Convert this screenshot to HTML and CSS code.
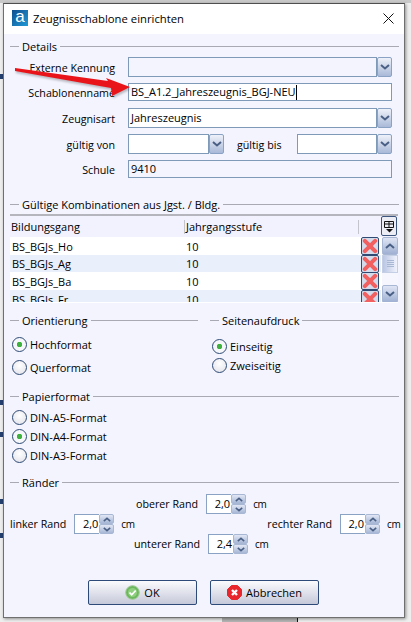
FILE: index.html
```html
<!DOCTYPE html>
<html lang="de">
<head>
<meta charset="utf-8">
<title>Zeugnisschablone einrichten</title>
<link rel="stylesheet" href="styles.css">
</head>
<body>
<svg class="defs" width="0" height="0" aria-hidden="true">
  <defs>
    <symbol id="down" viewBox="0 0 10 6"><path d="M1 1l4 3.4L9 1" fill="none" stroke="#4a5f85" stroke-width="2"/></symbol>
    <symbol id="up" viewBox="0 0 10 6"><path d="M1 5l4-3.4L9 5" fill="none" stroke="#4a5f85" stroke-width="2"/></symbol>
    <symbol id="redx" viewBox="0 0 14 14"><path d="M2.5 2.5l9 9M11.500 2.500l-9 9" stroke="#f2605f" stroke-width="3.600" stroke-linecap="round"/></symbol>
  </defs>
</svg>

<div class="stray stray-a"></div><div class="stray stray-b"></div><div class="stray stray-c"></div><div class="stray stray-d"></div><div class="stray stray-e"></div>
<div class="topstrip"></div>
<div class="bottombar"></div>

<main class="window">
  <header class="titlebar">
    <span class="logo">a</span>
    <span class="title">Zeugnisschablone einrichten</span>
    <svg class="close" width="11" height="11" viewBox="0 0 11 11"><path d="M.5.500l10 10M10.500.500l-10 10" stroke="#111" stroke-width="1"/></svg>
  </header>

  <div class="content">
    <section class="group details">
      <div class="legend"><span>Details</span></div>
      <div class="form">
        <div class="row r1">
          <label>Externe Kennung</label>
          <div class="combo"><div class="field"></div><button class="dd"><svg width="10" height="6"><use href="#down"/></svg></button></div>
        </div>
        <div class="row r2">
          <label>Schablonenname</label>
          <div class="field active">BS_A1.2_Jahreszeugnis_BGJ-NEU<i class="caret"></i></div>
        </div>
        <div class="row r3">
          <label>Zeugnisart</label>
          <div class="combo"><div class="field white">Jahreszeugnis</div><button class="dd"><svg width="10" height="6"><use href="#down"/></svg></button></div>
        </div>
        <div class="row r4">
          <label>gültig von</label>
          <div class="combo von"><div class="field white"></div><button class="dd"><svg width="10" height="6"><use href="#down"/></svg></button></div>
          <label class="bis">gültig bis</label>
          <div class="combo biscombo"><div class="field white"></div><button class="dd"><svg width="10" height="6"><use href="#down"/></svg></button></div>
        </div>
        <div class="row r5">
          <label>Schule</label>
          <div class="field">9410</div>
        </div>
      </div>
    </section>

    <section class="group combos">
      <div class="legend"><span>Gültige Kombinationen aus Jgst. / Bldg.</span></div>
      <div class="table">
        <div class="thead">
          <div class="th c1">Bildungsgang</div>
          <div class="th c2">Jahrgangsstufe</div>
          <button class="colbtn"><svg width="13" height="13" viewBox="0 0 13 13"><path d="M1.500 1.500h9v6h-9zM1.500 4h9M6 1.500v6" fill="none" stroke="#111"/><path d="M3 9h7l-3.500 3.500z" fill="#111"/></svg></button>
        </div>
        <div class="tbody">
          <div class="rows">
            <div class="tr h1"><div class="td c1">BS_BGJs_Ho</div><div class="td c2">10</div><button class="del"><svg width="16" height="16"><use href="#redx"/></svg></button></div>
            <div class="tr h2 alt"><div class="td c1">BS_BGJs_Ag</div><div class="td c2">10</div><button class="del"><svg width="16" height="16"><use href="#redx"/></svg></button></div>
            <div class="tr h1"><div class="td c1">BS_BGJs_Ba</div><div class="td c2">10</div><button class="del"><svg width="16" height="16"><use href="#redx"/></svg></button></div>
            <div class="tr h1 alt"><div class="td c1">BS_BGJs_Fr</div><div class="td c2">10</div><button class="del"><svg width="16" height="16"><use href="#redx"/></svg></button></div>
          </div>
          <div class="scrollbar">
            <button class="sb"><svg width="10" height="6"><use href="#up"/></svg></button>
            <div class="thumb"></div>
            <button class="sb end"><svg width="10" height="6"><use href="#down"/></svg></button>
          </div>
        </div>
      </div>
    </section>

    <div class="two">
      <section class="group orient">
        <div class="legend"><span>Orientierung</span></div>
        <div class="radios spaced">
          <div class="radio on">Hochformat</div>
          <div class="radio">Querformat</div>
        </div>
      </section>
      <section class="group seite">
        <div class="legend"><span>Seitenaufdruck</span></div>
        <div class="radios tight">
          <div class="radio on">Einseitig</div>
          <div class="radio">Zweiseitig</div>
        </div>
      </section>
    </div>

    <section class="group papier">
      <div class="legend"><span>Papierformat</span></div>
      <div class="radios paper">
        <div class="radio">DIN-A5-Format</div>
        <div class="radio on">DIN-A4-Format</div>
        <div class="radio">DIN-A3-Format</div>
      </div>
    </section>

    <section class="group raender">
      <div class="legend"><span>Ränder</span></div>
      <div class="margins">
        <div class="mrow top">
          <label>oberer Rand</label>
          <div class="spin"><div class="val">2,0</div><div class="arrows"><button><svg width="8" height="5"><use href="#up"/></svg></button><button><svg width="8" height="5"><use href="#down"/></svg></button></div></div>
          <span>cm</span>
        </div>
        <div class="mrow mid">
          <div class="mgroup">
            <label>linker Rand</label>
            <div class="spin"><div class="val">2,0</div><div class="arrows"><button><svg width="8" height="5"><use href="#up"/></svg></button><button><svg width="8" height="5"><use href="#down"/></svg></button></div></div>
            <span>cm</span>
          </div>
          <div class="mgroup">
            <label>rechter Rand</label>
            <div class="spin"><div class="val">2,0</div><div class="arrows"><button><svg width="8" height="5"><use href="#up"/></svg></button><button><svg width="8" height="5"><use href="#down"/></svg></button></div></div>
            <span>cm</span>
          </div>
        </div>
        <div class="mrow bottom">
          <label>unterer Rand</label>
          <div class="spin"><div class="val">2,4</div><div class="arrows"><button><svg width="8" height="5"><use href="#up"/></svg></button><button><svg width="8" height="5"><use href="#down"/></svg></button></div></div>
          <span>cm</span>
        </div>
      </div>
    </section>

    <div class="actions">
      <button class="action"><svg width="15" height="15" viewBox="0 0 15 15"><circle cx="7.500" cy="7.500" r="6.800" fill="#6cb85c" stroke="#9fc995"/><circle cx="7.500" cy="7.500" r="4.500" fill="#8fcf7f"/><path d="M4.500 7.500l2.200 2.300 4-4.300" fill="none" stroke="#fff" stroke-width="1.800"/></svg>OK</button>
      <button class="action"><svg width="15" height="15" viewBox="0 0 15 15"><path d="M4.500.500h6l4 4v6l-4 4h-6l-4-4v-6z" fill="#e8262b" stroke="#e8262b"/><path d="M5 5l5 5M10 5l-5 5" stroke="#fff" stroke-width="2.400"/></svg>Abbrechen</button>
    </div>
  </div>
</main>

<svg class="arrow" width="140" height="50" viewBox="0 0 140 50" aria-hidden="true">
  <polygon points="15,9 108,22 106,19 130,28 112,37 111,29 15,12" fill="#e8141a"/>
</svg>
</body>
</html>
```
FILE: styles.css
```css
* { box-sizing: border-box; }
html, body { margin: 0; padding: 0; }
body {
  width: 411px;
  height: 622px;
  position: relative;
  overflow: hidden;
  background: #eeeeee;
  font-family: "Open Sans", "Noto Sans", sans-serif;
  font-size: 11px;
  color: #000;
}
.defs { position: absolute; }
.topstrip { position: absolute; left: 0; right: 0; top: 0; height: 3px; background: #c9c9c9; }
.bottombar { position: absolute; left: 222px; top: 617px; width: 76px; height: 5px; background: #b4b4b4; border-right: 1px solid #111; }
.stray { position: absolute; left: 0; width: 3px; height: 5px; background: #24406e; }
.stray-a { top: 74px; }
.stray-b { top: 400px; }
.stray-c { top: 432px; }
.stray-d { top: 499px; }
.stray-e { top: 533px; }

.window {
  position: absolute;
  left: 3px;
  top: 3px;
  width: 402px;
  height: 615px;
  background: #f3f4fe;
  border: 1px solid #6f6f6f;
  border-top-color: #4e4e4e;
  box-shadow: 1px 1px 3px rgba(0,0,0,.4);
  display: flex;
  flex-direction: column;
}
.titlebar {
  height: 30px;
  flex: none;
  background: #fff;
  display: flex;
  align-items: center;
  padding: 0 10px 2px 8px;
  gap: 5px;
}
.logo {
  width: 16px;
  height: 16px;
  background: linear-gradient(135deg, #0f4e8e, #1e9ad6);
  color: #fff;
  font-size: 17px;
  line-height: 13px;
  text-align: center;
  font-family: "Liberation Sans", sans-serif;
}
.title { flex: 1; font-size: 11.3px; }
.content { flex: 1; display: flex; flex-direction: column; padding: 0 5px 0 6px; }

.group { display: flex; flex-direction: column; }
.legend {
  height: 14px;
  display: flex;
  align-items: center;
  gap: 3px;
}
.legend::before { content: ""; width: 9px; height: 1px; background: #a9a9b3; }
.legend::after { content: ""; flex: 1; height: 1px; background: #a9a9b3; }

.details { margin-top: 5px; }
.form { padding-top: 4px; display: flex; flex-direction: column; }
.row { display: flex; align-items: center; padding-right: 7px; }
.row > label { padding-top: 1px; font-size: 10.7px; }
.row > label:first-child { width: 105px; text-align: right; margin-right: 13px; }
.r1 { height: 20px; }
.r2 { height: 18px; margin-top: 6px; }
.r3 { height: 20px; margin-top: 7px; }
.r4 { height: 20px; margin-top: 6px; }
.r5 { height: 18px; margin-top: 6px; }
.field {
  flex: 1;
  height: 100%;
  border: 1px solid #7f9ab9;
  padding: 0 2px;
  line-height: 16px;
  min-width: 0;
}
.r3 .field, .r4 .field { line-height: 18px; }
.white, .active { background: #fff; }
.active { display: flex; align-items: center; }
.caret { width: 1px; height: 15px; background: #000; }
.combo { flex: 1; display: flex; height: 100%; }
.dd {
  width: 15px;
  flex: none;
  height: 100%;
  padding: 0;
  border: 1px solid #8aa3c4;
  border-radius: 2px;
  background: linear-gradient(#eef1f9, #a9b9d8);
  display: flex;
  align-items: center;
  justify-content: center;
}
.von { flex: none; width: 96px; }
.bis { margin: 0 12px 0 13px; width: 48px; }
.biscombo { flex: none; width: 95px; }

.combos { margin-top: 19px; }
.table { margin-top: 3px; margin-right: 1px; border-top: 2px solid #b4b5bd; }
.thead { height: 21px; display: flex; align-items: center; position: relative; background: #f1f2fe; }
.th { height: 14px; line-height: 14px; border-right: 1px solid #c3c4cc; }
.thead .c1 { width: 175px; padding-left: 1px; }
.thead .c2 { width: 174px; padding-left: 1px; }
.colbtn {
  position: absolute;
  left: 371px;
  top: 0;
  width: 16px;
  height: 20px;
  padding: 0;
  border: 1px solid #3c5680;
  border-radius: 2px;
  background: #ecedf5;
  display: flex;
  align-items: center;
  justify-content: center;
}
.tbody { display: flex; height: 66px; overflow: hidden; background: #fff; border-bottom: 1px solid #fff; }
.rows { width: 371px; flex: none; }
.tr { display: flex; align-items: center; background: #fff; }
.h1 { height: 18px; }
.h2 { height: 17px; }
.alt { background: #e9effb; }
.td.c1 { width: 175px; padding-left: 2px; }
.td.c2 { width: 176px; padding-left: 1px; }
.del {
  width: 18px;
  height: 18px;
  flex: none;
  padding: 0;
  border: 1px solid #2f4a73;
  border-radius: 2px;
  background: #d4dcec;
  display: flex;
  align-items: center;
  justify-content: center;
}
.scrollbar { width: 16px; margin-left: 1px; display: flex; flex-direction: column; height: 66px; position: relative; background: #f6f7fe; }
.sb {
  height: 18px;
  width: 16px;
  padding: 0;
  border: 1px solid #a8b7d3;
  border-radius: 2px;
  background: linear-gradient(#dfe5f4, #9fb0d3);
  display: flex;
  align-items: center;
  justify-content: center;
}
.sb.end { position: absolute; left: 0; top: 48px; }
.thumb {
  height: 18px;
  background: repeating-linear-gradient(#a8b7d3 0 1px, transparent 1px 2px) center / 7px 8px no-repeat, linear-gradient(90deg, #b9c6e4, #f0f3fb);
  border: 1px solid #c4cfe5;
}

.two { display: grid; grid-template-columns: 188px 189px; column-gap: 12px; margin-top: 10px; }
.radios { display: flex; flex-direction: column; }
.radio { display: flex; align-items: center; height: 19px; gap: 3px; padding-left: 2px; }
.radio::before {
  content: "";
  width: 13px;
  height: 13px;
  border-radius: 50%;
  border: 1px solid #2e4a75;
  background: radial-gradient(circle at 50% 35%, #fff, #dfe0e8);
  flex: none;
}
.radio.on::before { background: radial-gradient(circle, #3eb13e 0 2.500px, #f6f7fb 3px); }
.spaced { padding-top: 8px; gap: 4px; }
.tight { padding-top: 10px; }
.orient, .seite { height: 76px; }
.paper { padding-top: 5px; }
.raender { margin-top: 10px; }
.margins { padding-top: 5px; display: flex; flex-direction: column; }
.mrow { display: flex; align-items: center; height: 20px; }
.mrow label { margin-right: 8px; font-size: 10.7px; }
.mrow > span, .mgroup > span { margin-left: 7px; font-size: 10px; letter-spacing: -.3px; width: 12px; white-space: nowrap; }
.top { padding-left: 126px; }
.bottom { padding-left: 124px; }
.mid { justify-content: space-between; }
.mgroup { display: flex; align-items: center; }
.spin { display: flex; height: 20px; }
.val {
  width: 25px;
  height: 20px;
  background: #fff;
  border: 1px solid #8aa3c4;
  border-right: 0;
  text-align: right;
  line-height: 18px;
  padding-right: 1px;
}
.arrows { width: 15px; display: flex; flex-direction: column; }
.arrows button {
  height: 10px;
  padding: 0;
  border: 1px solid #a8b7d3;
  border-radius: 2px;
  background: linear-gradient(#e2e7f5, #a7b7d6);
  display: flex;
  align-items: center;
  justify-content: center;
}
.actions { display: flex; gap: 13px; padding-left: 78px; margin-top: 26px; }
.action {
  width: 109px;
  height: 25px;
  border: 1px solid #2d4a78;
  border-radius: 2px;
  background: linear-gradient(#fbfbfe, #c5c8d9);
  font: inherit;
  color: #000;
  display: flex;
  align-items: center;
  justify-content: center;
  gap: 4px;
  padding: 0;
}
.arrow { position: absolute; left: 0; top: 59px; filter: drop-shadow(1px 2px 1px rgba(0,0,0,.25)); }
```
